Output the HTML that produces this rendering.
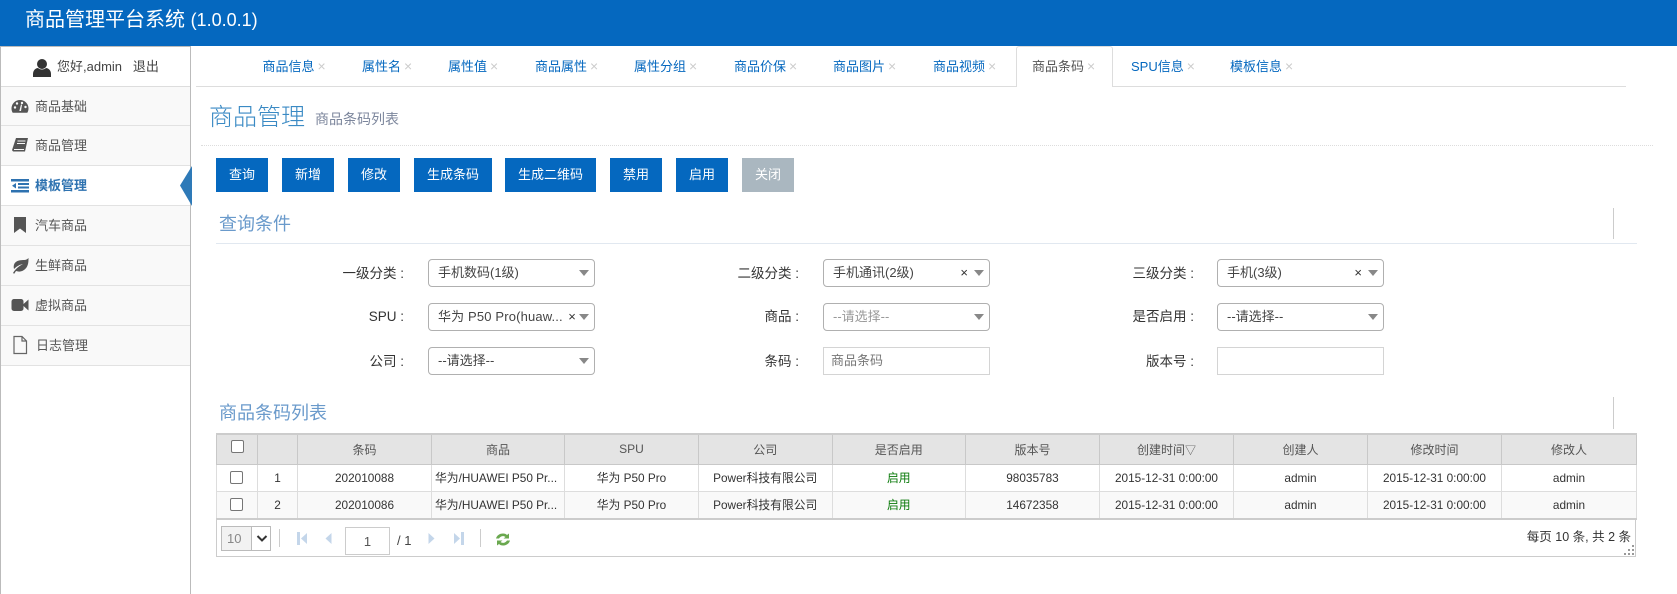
<!DOCTYPE html>
<html lang="zh"><head><meta charset="utf-8"><title>商品管理平台系统</title>
<style>
*{box-sizing:border-box}
html,body{margin:0;padding:0;width:1677px;height:594px;overflow:hidden;background:#fff;font-family:"Liberation Sans","Noto Sans CJK SC",sans-serif;color:#333}
.a{position:absolute;white-space:nowrap}
#hd{left:0;top:0;width:1677px;height:46px;background:#0568bf}
#side{left:0;top:46px;width:191px;height:548px;border-left:1px solid #bbb;border-right:1px solid #bbb;border-top:1px solid #bbb;background:#fff}
.it{left:1px;width:189px;height:40px;background:#f9f9f9;border-bottom:1px solid #e2e2e2;font-size:13px;color:#555;line-height:39px;padding-left:34px}
.it svg{position:absolute;left:10px;top:10px}
.tab{top:48px;height:38px;line-height:37px;font-size:13px;color:#0568bf}
.x{color:#ccc;font-size:14px;margin-left:3px}
.btn{top:158px;height:34px;line-height:34px;background:#0568bf;color:#fff;text-align:center;font-size:13px}
.sec{font-size:18px;color:#6a9acb;line-height:24px}
.lb{width:100px;text-align:right;font-size:13.5px;color:#333;line-height:20px}
.sel{width:167px;height:28px;border:1px solid #b0b0b0;border-radius:4px;background:#fff;font-size:13px;line-height:26px;padding-left:9px;color:#444}
.sel i{position:absolute;right:5px;top:10px;width:0;height:0;border-left:5px solid transparent;border-right:5px solid transparent;border-top:6px solid #888}
.sel b{position:absolute;right:21px;top:0;font-weight:400;color:#333;font-size:13px}
.inp{width:167px;height:28px;border:1px solid #d4d4d4;background:#fff;font-size:13px;line-height:26px;padding-left:7px;color:#777}
table{border-collapse:collapse;table-layout:fixed;position:absolute;left:216px;top:433px;width:1420px}
td,th{font-weight:400;text-align:center;overflow:hidden;white-space:nowrap;padding:0}
th{height:30px;background:#e4e4e4;border:1px solid #c8c8c8;border-top:2px solid #ccc;font-size:12px;color:#555}
td{height:27px;border:1px solid #ddd;font-size:11.8px;color:#333}
tr.r2 td{background:#f9f9f9;height:28px;border-bottom:2px solid #ccc}
.cb{display:inline-block;width:13px;height:13px;border:1px solid #767676;border-radius:2px;background:#fff;vertical-align:middle;position:relative;top:-1px;left:-1px}
th .cb{top:-3px;left:0}
</style></head><body>
<div class="a" id="hd"></div>
<div class="a" style="left:25px;top:6px;font-size:20px;line-height:28px;color:#fff">商品管理平台系统 <span style="font-size:18px">(1.0.0.1)</span></div>

<div class="a" id="side"></div>
<div class="a" style="left:1px;top:47px;width:189px;height:40px;border-bottom:1px solid #ddd;background:#fff"></div>
<svg class="a" style="left:32px;top:58px" width="20" height="20" viewBox="0 0 20 20"><circle cx="10" cy="6" r="5" fill="#333"/><path d="M1 19v-3c0-4 3-6 5-6 1 1 2.500 1.500 4 1.500s3-.5 4-1.500c2 0 5 2 5 6v3z" fill="#333"/></svg>
<div class="a" style="left:57px;top:57px;font-size:13px;line-height:20px;color:#444">您好,admin&nbsp;&nbsp;&nbsp;退出</div>

<div class="a it" style="top:87px;height:39px"><svg width="18" height="18" viewBox="0 0 18 18"><path d="M9 3a8.500 8.500 0 0 0-8.500 8.500c0 1.500.4 3 1.200 4.300h14.600c.8-1.300 1.200-2.800 1.200-4.300A8.500 8.500 0 0 0 9 3z" fill="#555"/><circle cx="4" cy="10.500" r="1.200" fill="#f9f9f9"/><circle cx="6" cy="6.500" r="1.200" fill="#f9f9f9"/><circle cx="11" cy="6" r="1.200" fill="#f9f9f9"/><circle cx="14.500" cy="10" r="1.200" fill="#f9f9f9"/><path d="M8.300 14 10 7.500l1 .3-1 6.200z" fill="#f9f9f9"/></svg>商品基础</div>
<div class="a it" style="top:126px"><svg width="18" height="18" viewBox="0 0 18 18"><path d="M5 2h12l-3 13.500H3c-1.500 0-2-1-1.800-2z" fill="#555"/><path d="M6.500 5h8M6 7.500h8M3 13.500h10" stroke="#f9f9f9" stroke-width="1"/></svg>商品管理</div>
<div class="a it" style="top:166px;background:#fff;color:#2e72b0;font-weight:700"><svg width="18" height="18" viewBox="0 0 18 18"><path d="M0 3h18v2.500H0zM7 7h11v2H7zM7 10.500h11v2H7zM0 14h18v2.500H0z" fill="#2e72b0"/><path d="M5 7v5.500L1 9.700z" fill="#2e72b0"/></svg>模板管理</div>
<svg class="a" style="left:180px;top:166px" width="12" height="40" viewBox="0 0 12 40"><path d="M12 0 0 19.500 12 40z" fill="#2e7ab8"/></svg>
<div class="a it" style="top:206px"><svg width="18" height="18" viewBox="0 0 18 18"><path d="M3 1h12v16l-6-4.500L3 17z" fill="#555"/></svg>汽车商品</div>
<div class="a it" style="top:246px"><svg width="18" height="18" viewBox="0 0 18 18"><path d="M17.500 2C15 5 12 3.500 8 4.500 3.500 5.500 2 9 3 13c3-3 6-4.500 9-5-3 1.500-7 4-10 9l1.200.8L5 15c4 1.500 8 0 10.500-3.500 2-3 2-6.500 2-9.500z" fill="#555"/></svg>生鲜商品</div>
<div class="a it" style="top:286px"><svg width="18" height="18" viewBox="0 0 18 18"><rect x="0.500" y="3" width="12" height="12" rx="2.500" fill="#555"/><path d="M12.500 8 17.500 3.500v11L12.500 10z" fill="#555"/></svg>虚拟商品</div>
<div class="a it" style="top:326px;padding-left:35px"><svg width="18" height="20" viewBox="0 0 18 20" style="top:9px"><path d="M3 1.500h8l4.500 4.500v12.500H3zM11 1.500V6h4.500" fill="none" stroke="#666" stroke-width="1.200"/></svg>日志管理</div>

<div class="a" style="left:196px;top:86px;width:1430px;height:1px;background:#ddd"></div>
<div class="a" style="left:1016px;top:46px;width:97px;height:41px;background:#fff;border:1px solid #ddd;border-bottom:0;border-radius:3px 3px 0 0"></div>
<div class="a tab" style="left:262.500px">商品信息<span class="x">×</span></div>
<div class="a tab" style="left:362px">属性名<span class="x">×</span></div>
<div class="a tab" style="left:448px">属性值<span class="x">×</span></div>
<div class="a tab" style="left:535px">商品属性<span class="x">×</span></div>
<div class="a tab" style="left:634px">属性分组<span class="x">×</span></div>
<div class="a tab" style="left:734px">商品价保<span class="x">×</span></div>
<div class="a tab" style="left:833px">商品图片<span class="x">×</span></div>
<div class="a tab" style="left:933px">商品视频<span class="x">×</span></div>
<div class="a tab" style="left:1032px;color:#555">商品条码<span class="x">×</span></div>
<div class="a tab" style="left:1131px">SPU信息<span class="x">×</span></div>
<div class="a tab" style="left:1230px">模板信息<span class="x">×</span></div>

<div class="a" style="left:209px;top:101px;font-size:24px;line-height:34px;color:#3a8ac4;font-weight:300">商品管理</div>
<div class="a" style="left:315px;top:109px;font-size:14px;line-height:20px;color:#7c869c">商品条码列表</div>
<div class="a" style="left:201px;top:145px;width:1452px;border-top:1px dotted #ddd"></div>

<div class="a btn" style="left:216px;width:52px">查询</div>
<div class="a btn" style="left:282px;width:52px">新增</div>
<div class="a btn" style="left:348px;width:52px">修改</div>
<div class="a btn" style="left:414px;width:78px">生成条码</div>
<div class="a btn" style="left:505px;width:91px">生成二维码</div>
<div class="a btn" style="left:610px;width:52px">禁用</div>
<div class="a btn" style="left:676px;width:52px">启用</div>
<div class="a btn" style="left:742px;width:52px;background:#aab7c0">关闭</div>

<div class="a sec" style="left:219px;top:212px">查询条件</div>
<div class="a" style="left:216px;top:243px;width:1421px;height:1px;background:#e1e8f0"></div>
<div class="a" style="left:1613px;top:208px;width:1px;height:31px;background:#ccc"></div>

<div class="a lb" style="left:304px;top:264px">一级分类 :</div>
<div class="a lb" style="left:304px;top:307px">SPU :</div>
<div class="a lb" style="left:304px;top:352px">公司 :</div>
<div class="a lb" style="left:699px;top:264px">二级分类 :</div>
<div class="a lb" style="left:699px;top:307px">商品 :</div>
<div class="a lb" style="left:699px;top:352px">条码 :</div>
<div class="a lb" style="left:1094px;top:264px">三级分类 :</div>
<div class="a lb" style="left:1094px;top:307px">是否启用 :</div>
<div class="a lb" style="left:1094px;top:352px">版本号 :</div>

<div class="a sel" style="left:428px;top:259px">手机数码(1级)<i></i></div>
<div class="a sel" style="left:428px;top:303px;letter-spacing:.15px">华为 P50 Pro(huaw...<b style="right:18px">×</b><i></i></div>
<div class="a sel" style="left:428px;top:347px">--请选择--<i></i></div>
<div class="a sel" style="left:823px;top:259px">手机通讯(2级)<b>×</b><i></i></div>
<div class="a sel" style="left:823px;top:303px;color:#999">--请选择--<i></i></div>
<div class="a inp" style="left:823px;top:347px">商品条码</div>
<div class="a sel" style="left:1217px;top:259px">手机(3级)<b>×</b><i></i></div>
<div class="a sel" style="left:1217px;top:303px">--请选择--<i></i></div>
<div class="a inp" style="left:1217px;top:347px"></div>

<div class="a sec" style="left:219px;top:401px">商品条码列表</div>
<div class="a" style="left:1613px;top:397px;width:1px;height:32px;background:#ccc"></div>

<table>
<colgroup><col style="width:41px"><col style="width:40px"><col style="width:134px"><col style="width:133px"><col style="width:134px"><col style="width:133.500px"><col style="width:133.500px"><col style="width:134px"><col style="width:134px"><col style="width:134px"><col style="width:134px"><col style="width:135px"></colgroup>
<tr><th><span class="cb"></span></th><th></th><th>条码</th><th>商品</th><th>SPU</th><th>公司</th><th>是否启用</th><th>版本号</th><th>创建时间<span style="font-size:11px">▽</span></th><th>创建人</th><th>修改时间</th><th>修改人</th></tr>
<tr><td><span class="cb"></span></td><td>1</td><td>202010088</td><td style="text-align:left;padding-left:3px">华为/HUAWEI P50 Pr...</td><td>华为 P50 Pro</td><td>Power科技有限公司</td><td style="color:#0a7a0a">启用</td><td>98035783</td><td>2015-12-31 0:00:00</td><td>admin</td><td>2015-12-31 0:00:00</td><td>admin</td></tr>
<tr class="r2"><td><span class="cb"></span></td><td>2</td><td>202010086</td><td style="text-align:left;padding-left:3px">华为/HUAWEI P50 Pr...</td><td>华为 P50 Pro</td><td>Power科技有限公司</td><td style="color:#0a7a0a">启用</td><td>14672358</td><td>2015-12-31 0:00:00</td><td>admin</td><td>2015-12-31 0:00:00</td><td>admin</td></tr>
</table>

<div class="a" style="left:216px;top:519px;width:1420px;height:38px;border:1px solid #ccc;border-top:0"></div>
<div class="a" style="left:221px;top:526px;width:50px;height:25px;border:1px solid #bbb;background:#fff"></div>
<div class="a" style="left:222px;top:527px;width:30px;height:23px;background:#f2f2f2;border-right:1px solid #bbb;font-size:13px;line-height:23px;color:#888;padding-left:5px">10</div>
<svg class="a" style="left:256px;top:534px" width="12" height="9" viewBox="0 0 12 9"><path d="M1.500 2 6 6.500 10.500 2" fill="none" stroke="#333" stroke-width="2"/></svg>
<div class="a" style="left:279px;top:529px;width:1px;height:18px;background:#ccc"></div>
<svg class="a" style="left:297px;top:532px" width="11" height="13" viewBox="0 0 11 13"><path d="M0 0h3v13H0z" fill="#c4d6ea"/><path d="M10 1v11L4 6.500z" fill="#c4d6ea"/></svg>
<svg class="a" style="left:325px;top:532px" width="7" height="13" viewBox="0 0 7 13"><path d="M6.500 1v11L.5 6.500z" fill="#c4d6ea"/></svg>
<div class="a" style="left:345px;top:527px;width:45px;height:28px;border:1px solid #ccc;text-align:center;font-size:13px;line-height:28px;color:#555">1</div>
<div class="a" style="left:397px;top:531px;font-size:13px;line-height:20px;color:#444">/ 1</div>
<svg class="a" style="left:428px;top:532px" width="7" height="13" viewBox="0 0 7 13"><path d="M.5 1v11l6-5.500z" fill="#c4d6ea"/></svg>
<svg class="a" style="left:453px;top:532px" width="11" height="13" viewBox="0 0 11 13"><path d="M8 0h3v13H8z" fill="#c4d6ea"/><path d="M1 1v11l6-5.500z" fill="#c4d6ea"/></svg>
<div class="a" style="left:480px;top:529px;width:1px;height:18px;background:#ccc"></div>
<svg class="a" style="left:494px;top:531px" width="18" height="17" viewBox="0 0 18 17"><path d="M2 7.500C3 4 6 2.500 9 2.500c2 0 3 .5 4 1.500l2-1.500v5h-5.500l2-1.500c-2-1.500-5-1-6.500 1.500z" fill="#6aa84f"/><path d="M16 9.500c-1 3.500-4 5-7 5-2 0-3-.5-4-1.500l-2 1.500v-5h5.500l-2 1.500c2 1.500 5 1 6.500-1.500z" fill="#6aa84f"/></svg>
<div class="a" style="left:1500px;top:528px;width:131px;text-align:right;font-size:12.500px;line-height:18px;color:#333">每页 10 条, 共 2 条</div>
<svg class="a" style="left:1624px;top:545px" width="11" height="11" viewBox="0 0 11 11" fill="#999"><rect x="8" y="0" width="2" height="2"/><rect x="4" y="4" width="2" height="2"/><rect x="8" y="4" width="2" height="2"/><rect x="0" y="8" width="2" height="2"/><rect x="4" y="8" width="2" height="2"/><rect x="8" y="8" width="2" height="2"/></svg>
</body></html>
